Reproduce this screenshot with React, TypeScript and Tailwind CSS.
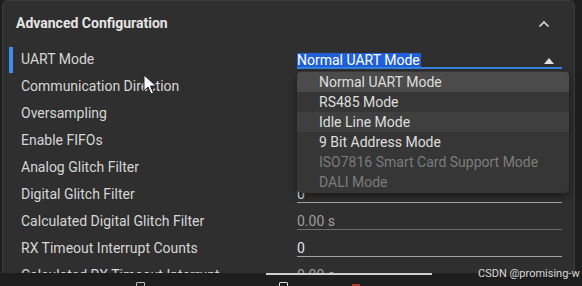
import React from "react";

const font = { fontFamily: "Roboto, 'Noto Sans', sans-serif" };

type Row = { label: string; value?: string; kind: "select" | "edit" | "ro" | "hidden" };

const rows: Row[] = [
  { label: "UART Mode", value: "Normal UART Mode", kind: "select" },
  { label: "Communication Direction", kind: "hidden" },
  { label: "Oversampling", kind: "hidden" },
  { label: "Enable FIFOs", kind: "hidden" },
  { label: "Analog Glitch Filter", kind: "hidden" },
  { label: "Digital Glitch Filter", value: "0", kind: "edit" },
  { label: "Calculated Digital Glitch Filter", value: "0.00 s", kind: "ro" },
  { label: "RX Timeout Interrupt Counts", value: "0", kind: "edit" },
  { label: "Calculated RX Timeout Interrupt", value: "0.00 s", kind: "ro" },
];

const items = [
  { t: "Normal UART Mode", s: "sel" },
  { t: "RS485 Mode", s: "" },
  { t: "Idle Line Mode", s: "hover" },
  { t: "9 Bit Address Mode", s: "" },
  { t: "ISO7816 Smart Card Support Mode", s: "dis" },
  { t: "DALI Mode", s: "dis" },
];

function Field({ row }: { row: Row }) {
  if (row.kind === "select") {
    return (
      <div className="w-[265px] h-[23px] pt-[7px] border-b-2 border-[#3584e4] flex items-start justify-between">
        <span className="bg-[#1f5fd8] text-white leading-[14px] text-[14px] pr-[1px]">{row.value}</span>
        <svg width="10" height="6" viewBox="0 0 10 6" className="mt-[5px] mr-[8px]">
          <path d="M0 6 L5 0 L10 6 Z" fill="#e0e0e0" />
        </svg>
      </div>
    );
  }
  if (row.kind === "hidden") {
    return <div className="w-[265px] h-[22px] border-b border-[#a4a4a4]" />;
  }
  const ro = row.kind === "ro";
  return (
    <div
      className={`w-[265px] h-[22px] pt-[6px] leading-[15px] text-[14px] border-b ${
        ro ? "border-[#6c6c6c] text-[#9e9e9e]" : "border-[#a4a4a4] text-[#e2e2e2]"
      }`}
    >
      {row.value}
    </div>
  );
}

export default function App() {
  return (
    <div className="relative w-[582px] h-[286px] bg-[#1e1e1e] overflow-hidden flex flex-col" style={font}>
      <div className="ml-[2px] w-[573px] h-[273px] bg-[#2f2f2f] border-l border-r border-t border-[#3c3c3c] rounded-t-[6px] overflow-hidden flex flex-col">
        <div className="h-[45px] shrink-0 flex items-center justify-between pl-[13px] pr-[24px]">
          <span className="text-[14px] font-bold text-[#e4e4e4]">Advanced Configuration</span>
          <svg width="12" height="8" viewBox="0 0 12 8">
            <path d="M1.5 6.5 L6 2 L10.5 6.5" stroke="#dcdcdc" strokeWidth="1.6" fill="none" />
          </svg>
        </div>
        {rows.map((r, i) => (
          <div key={i} className="h-[27px] shrink-0 flex items-start">
            <div className="w-[294px] h-[27px] flex items-center">
              <div className={`ml-[6px] w-[4px] h-[26px] mt-[1px] ${i === 0 ? "bg-[#3b8ef0]" : ""}`} />
              <span className="ml-[8px] text-[14px] text-[#d6d6d6] whitespace-nowrap">{r.label}</span>
            </div>
            <Field row={r} />
          </div>
        ))}
      </div>
      <div className="relative h-[13px] shrink-0">
        <div className="absolute left-[266px] top-[0px] w-[166px] h-[2px] bg-[#cfcfcf]" />
        <div className="absolute left-[136px] top-[9px] w-[9px] h-[9px] border border-[#bdbdbd] rounded-[1px]" />
        <div className="absolute left-[279px] top-[9px] w-[9px] h-[9px] border border-[#e0e0e0] rounded-[1px]" />
        <div className="absolute left-[352px] top-[11px] w-[8px] h-[3px] bg-[#b03a2e]" />
      </div>

      {/* dropdown menu */}
      <div className="absolute left-[297px] top-[71px] w-[272px] h-[122px] py-[1px] bg-[#363636] rounded-[5px] shadow-[0_3px_8px_rgba(0,0,0,0.5)] overflow-hidden">
        {items.map((it, i) => (
          <div
            key={i}
            className={`h-[20px] pl-[22px] flex items-center text-[14px] whitespace-nowrap ${
              it.s === "sel"
                ? "bg-[#4b4b4b] text-[#dedede]"
                : it.s === "hover"
                ? "bg-[#3f3f3f] text-[#dedede]"
                : it.s === "dis"
                ? "text-[#7c7c7c]"
                : "text-[#dedede]"
            }`}
          >
            {it.t}
          </div>
        ))}
      </div>

      {/* cursor */}
      <svg className="absolute left-[143px] top-[74px]" width="14" height="22" viewBox="0 0 14 22">
        <path d="M1 1 L1 17 L5 13 L8 20 L10.5 19 L7.5 12 L13 12 Z" fill="#ffffff" stroke="#222" strokeWidth="1" strokeLinejoin="round" />
      </svg>

      {/* watermark */}
      <div className="absolute left-[478px] top-[266px] text-[11px] leading-[16px] text-[#d8d8d8] whitespace-nowrap" style={{ fontFamily: "Roboto, sans-serif" }}>
        CSDN @promising-w
      </div>
    </div>
  );
}
